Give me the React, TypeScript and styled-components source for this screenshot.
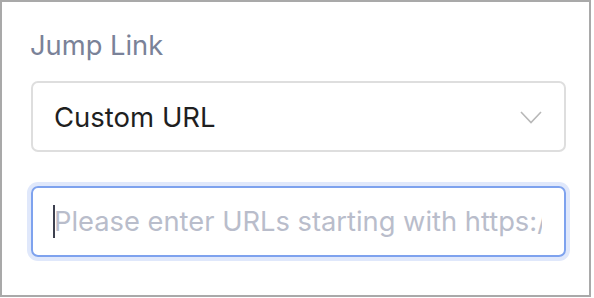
import React from "react";
import styled, { createGlobalStyle } from "styled-components";

const Global = createGlobalStyle`
  html, body { margin: 0; padding: 0; background: #ffffff; }
  * { box-sizing: border-box; }
`;

const Panel = styled.div`
  width: 591px;
  height: 297px;
  border: 2px solid #a9a9a9;
  background: #ffffff;
  padding: 28px 23px 0 29px;
  display: flex;
  flex-direction: column;
  font-family: Inter, "Noto Sans", sans-serif;
`;

const Label = styled.div`
  font-size: 27.3px;
  line-height: 32px;
  color: #7a8298;
  height: 51px;
  margin-left: -1px;
`;

const Select = styled.div`
  height: 71px;
  border: 2px solid #dedede;
  border-radius: 7px;
  display: flex;
  align-items: center;
  justify-content: space-between;
  padding: 0 22px 0 21px;
  font-size: 27.5px;
  color: #1f1f1f;
`;

const Chevron = styled.svg`
  width: 22px;
  height: 14px;
  display: block;
`;

const InputWrap = styled.div`
  margin-top: 34px;
  height: 71px;
  border: 2px solid #7ea2ee;
  border-radius: 7px;
  box-shadow: 0 0 0 4px #e0e8fb;
  display: flex;
  align-items: center;
  padding: 0 22px 0 21px;
  position: relative;
`;

const Input = styled.input`
  flex: 1;
  min-width: 0;
  height: 100%;
  border: none;
  outline: none;
  background: transparent;
  padding: 0;
  font-family: Inter, "Noto Sans", sans-serif;
  font-size: 27.3px;
  color: #1f1f1f;
  caret-color: transparent;
  &::placeholder { color: #b9bdcb; }
`;

const Caret = styled.span`
  position: absolute;
  left: 20px;
  top: 17px;
  width: 2px;
  height: 33px;
  background: #3d404f;
  pointer-events: none;
`;

export default function App() {
  return (
    <>
      <Global />
      <Panel>
        <Label>Jump Link</Label>
        <Select>
          <span>Custom URL</span>
          <Chevron viewBox="0 0 22 14">
            <polyline points="1,2 11,12.5 21,2" fill="none" stroke="#b8b8b8" strokeWidth="1.6" />
          </Chevron>
        </Select>
        <InputWrap>
          <Caret />
          <Input placeholder="Please enter URLs starting with https://" />
        </InputWrap>
      </Panel>
    </>
  );
}
